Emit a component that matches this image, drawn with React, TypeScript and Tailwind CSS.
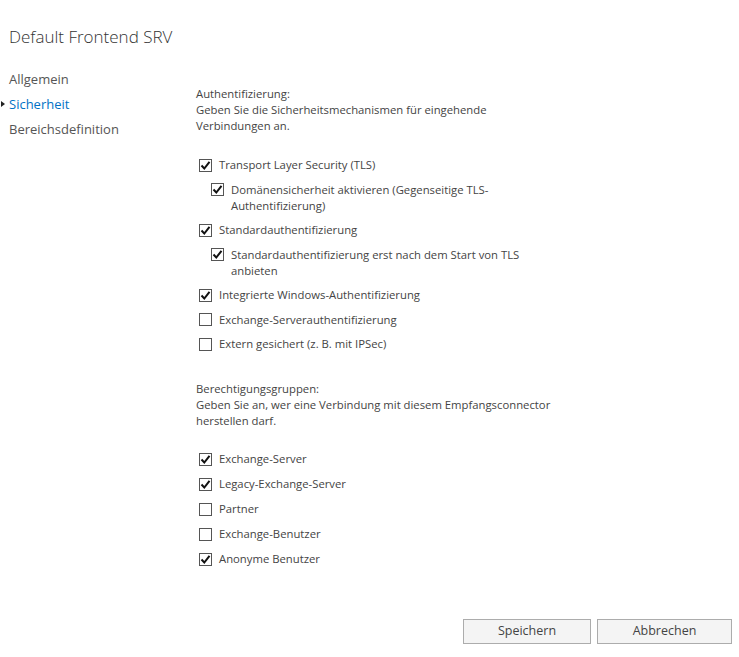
import type { ReactNode } from 'react';

const font = { fontFamily: '"Open Sans", "Noto Sans", sans-serif' };

function Box({ checked }: { checked: boolean }) {
  return (
    <span className="mt-[1.5px] flex h-[13px] w-[13px] shrink-0 items-center justify-center border border-[#555] bg-white">
      {checked && (
        <svg width="11" height="11" viewBox="0 0 11 11">
          <path d="M1.5 5.5 L4.3 8.5 L9.5 1.8" fill="none" stroke="#111" strokeWidth="2" />
        </svg>
      )}
    </span>
  );
}

function Check({ checked, indent, children }: { checked: boolean; indent?: boolean; children: ReactNode }) {
  return (
    <div className={`flex items-start gap-[7px] ${indent ? 'pl-[15px]' : 'pl-[3px]'}`}>
      <Box checked={checked} />
      <span className="leading-4">{children}</span>
    </div>
  );
}

export default function App() {
  return (
    <div className="h-[657px] w-[739px] bg-white text-[11.3px] text-[#444]" style={font}>
      <h1 className="pl-[9px] pt-[25px] text-[17px] font-light leading-6 text-[#333]">Default Frontend SRV</h1>

      <div className="mt-[18px] flex">
        {/* Sidebar */}
        <nav className="w-[196px] shrink-0 text-[13px] leading-[25px] text-[#555]">
          <div className="pl-[9px]">Allgemein</div>
          <div className="relative pl-[9px] text-[#0072c6]">
            <span className="absolute left-[1px] top-[9px] h-0 w-0 border-y-[3.5px] border-l-[4px] border-y-transparent border-l-[#222]" />
            Sicherheit
          </div>
          <div className="pl-[9px]">Bereichsdefinition</div>
        </nav>

        {/* Content */}
        <div className="pt-[19px]">
          <p className="leading-4">
            Authentifizierung:
            <br />
            Geben Sie die Sicherheitsmechanismen für eingehende
            <br />
            Verbindungen an.
          </p>

          <div className="mt-[23px] flex flex-col gap-[8.5px]">
            <Check checked>Transport Layer Security (TLS)</Check>
            <Check checked indent>
              Domänensicherheit aktivieren (Gegenseitige TLS-
              <br />
              Authentifizierung)
            </Check>
            <Check checked>Standardauthentifizierung</Check>
            <Check checked indent>
              Standardauthentifizierung erst nach dem Start von TLS
              <br />
              anbieten
            </Check>
            <Check checked>Integrierte Windows-Authentifizierung</Check>
            <Check checked={false}>Exchange-Serverauthentifizierung</Check>
            <Check checked={false}>Extern gesichert (z. B. mit IPSec)</Check>
          </div>

          <p className="mt-[29px] leading-4">
            Berechtigungsgruppen:
            <br />
            Geben Sie an, wer eine Verbindung mit diesem Empfangsconnector
            <br />
            herstellen darf.
          </p>

          <div className="mt-[22px] flex flex-col gap-[9px]">
            <Check checked>Exchange-Server</Check>
            <Check checked>Legacy-Exchange-Server</Check>
            <Check checked={false}>Partner</Check>
            <Check checked={false}>Exchange-Benutzer</Check>
            <Check checked>Anonyme Benutzer</Check>
          </div>
        </div>
      </div>

      <div className="mt-[52px] flex justify-end gap-[6px] pr-[7px]">
        <button className="h-[25px] w-[128px] border border-[#acacac] bg-[#f4f4f4] text-[12.5px] text-[#444]">Speichern</button>
        <button className="h-[25px] w-[135px] border border-[#acacac] bg-[#f4f4f4] text-[12.5px] text-[#444]">Abbrechen</button>
      </div>
    </div>
  );
}
